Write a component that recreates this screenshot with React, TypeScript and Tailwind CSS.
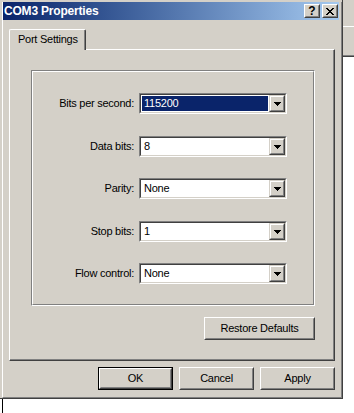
import React from "react";

const FONT = "font-['Liberation_Sans',Arial,sans-serif]";

function Bevel({
  className = "",
  innerClassName = "",
  children,
}: {
  className?: string;
  innerClassName?: string;
  children?: React.ReactNode;
}) {
  return (
    <div
      className={`border border-t-white border-l-white border-r-[#404040] border-b-[#404040] bg-[#d4d0c8] ${className}`}
    >
      <div
        className={`h-full w-full border border-t-[#d4d0c8] border-l-[#d4d0c8] border-r-[#808080] border-b-[#808080] ${innerClassName}`}
      >
        {children}
      </div>
    </div>
  );
}

function ArrowBtn() {
  return (
    <div className="w-[16px] h-[17px] border border-t-[#d4d0c8] border-l-[#d4d0c8] border-r-[#404040] border-b-[#404040] bg-[#d4d0c8]">
      <div className="h-full w-full border border-t-white border-l-white border-r-[#808080] border-b-[#808080] flex items-center justify-center">
        <svg width="7" height="4" viewBox="0 0 7 4" shapeRendering="crispEdges">
          <rect x="0" y="0" width="7" height="1" fill="#000" />
          <rect x="1" y="1" width="5" height="1" fill="#000" />
          <rect x="2" y="2" width="3" height="1" fill="#000" />
          <rect x="3" y="3" width="1" height="1" fill="#000" />
        </svg>
      </div>
    </div>
  );
}

function Combo({ value, selected = false }: { value: string; selected?: boolean }) {
  return (
    <div className="w-[148px] h-[21px] border border-t-[#808080] border-l-[#808080] border-r-white border-b-white">
      <div className="h-full w-full border border-t-[#404040] border-l-[#404040] border-r-[#d4d0c8] border-b-[#d4d0c8] bg-white flex">
        <div className="flex-1 p-[1px] flex">
          {selected ? (
            <div className="flex-1 bg-[#0a246a] text-white pl-[2px] flex items-center">{value}</div>
          ) : (
            <div className="flex-1 text-black pl-[2px] flex items-center">{value}</div>
          )}
        </div>
        <ArrowBtn />
      </div>
    </div>
  );
}

function Row({ label, value, selected = false }: { label: string; value: string; selected?: boolean }) {
  return (
    <div className="flex items-center h-[21px]">
      <div className="w-[101px] text-right text-black">{label}</div>
      <div className="ml-[5px]">
        <Combo value={value} selected={selected} />
      </div>
    </div>
  );
}

function CloseGlyph() {
  const px: [number, number, number][] = [
    [0, 0, 2],
    [6, 0, 2],
    [1, 1, 2],
    [5, 1, 2],
    [2, 2, 4],
    [3, 3, 2],
    [2, 4, 4],
    [1, 5, 2],
    [5, 5, 2],
    [0, 6, 2],
    [6, 6, 2],
  ];
  return (
    <svg width="8" height="7" viewBox="0 0 8 7" shapeRendering="crispEdges">
      {px.map(([x, y, w], i) => (
        <rect key={i} x={x} y={y} width={w} height={1} fill="#000" />
      ))}
    </svg>
  );
}

export default function App() {
  return (
    <div className={`w-[354px] h-[413px] bg-white overflow-hidden text-[11px] tracking-[-0.25px] ${FONT}`}>
      <div className="flex">
        {/* Window */}
        <div className="w-[343px] h-[399px] bg-[#d4d0c8] border-r border-b border-[#404040] pl-[2px] pt-[2px]">
          <div className="h-full border-l border-l-white border-r border-r-[#808080] border-b border-b-[#808080] pr-[2px] flex flex-col">
            {/* Title bar */}
            <div className="h-[18px] shrink-0 bg-gradient-to-r from-[#0a246a] to-[#a6caf0] flex items-center">
              <span className="pl-[1px] text-white font-bold text-[12px] tracking-[-0.2px] leading-none">
                COM3 Properties
              </span>
              <div className="ml-auto mr-[1px] flex gap-[2px]">
                <Bevel className="w-[16px] h-[14px]" innerClassName="flex items-center justify-center">
                  <span className="text-black font-bold text-[12px] leading-none tracking-normal">?</span>
                </Bevel>
                <Bevel className="w-[16px] h-[14px]" innerClassName="flex items-center justify-center">
                  <CloseGlyph />
                </Bevel>
              </div>
            </div>

            {/* Tab */}
            <div className="mt-[9px] ml-[6px] w-[77px] h-[21px] -mb-[1px] relative z-10 bg-[#d4d0c8] border-l border-t border-white border-r border-r-[#404040] rounded-tl-[2px] rounded-tr-[2px]">
              <div className="h-full border-r border-r-[#808080] flex items-center pl-[8px] pb-[1px] text-black">
                Port Settings
              </div>
            </div>

            {/* Panel */}
            <div className="ml-[6px] w-[326px] h-[312px] border-l border-t border-white border-r border-r-[#404040] border-b border-b-[#404040]">
              <div className="h-full border-r border-r-[#808080] border-b border-b-[#808080] pl-[21px] pt-[20px]">
                <div className="w-[284px] flex flex-col items-end">
                  {/* Group box (etched) */}
                  <div className="w-full border border-t-[#808080] border-l-[#808080] border-r-white border-b-white">
                    <div className="border border-t-white border-l-white border-r-[#808080] border-b-[#808080] pt-[21px] pb-[20px] flex flex-col">
                      <Row label="Bits per second:" value="115200" selected />
                      <div className="h-[22px]" />
                      <Row label="Data bits:" value="8" />
                      <div className="h-[21px]" />
                      <Row label="Parity:" value="None" />
                      <div className="h-[22px]" />
                      <Row label="Stop bits:" value="1" />
                      <div className="h-[21px]" />
                      <Row label="Flow control:" value="None" />
                    </div>
                  </div>
                  <Bevel className="mt-[11px] w-[111px] h-[23px]" innerClassName="flex items-center justify-center text-black">
                    Restore Defaults
                  </Bevel>
                </div>
              </div>
            </div>

            {/* Bottom buttons */}
            <div className="mt-[6px] flex justify-end gap-[6px] pr-[4px]">
              <div className="w-[75px] h-[23px] border border-black">
                <Bevel className="w-full h-full" innerClassName="flex items-center justify-center text-black">
                  OK
                </Bevel>
              </div>
              <Bevel className="w-[75px] h-[23px]" innerClassName="flex items-center justify-center text-black">
                Cancel
              </Bevel>
              <Bevel className="w-[75px] h-[23px]" innerClassName="flex items-center justify-center text-black">
                Apply
              </Bevel>
            </div>
          </div>
        </div>

        {/* Right strip: neighbouring window */}
        <div className="w-[11px] flex flex-col">
          <div className="h-[26px] bg-[#d4d0c8]" />
          <div className="h-[1px] bg-white" />
          <div className="h-[28px] bg-[#d4d0c8]" />
          <div className="h-[1px] bg-[#808080]" />
          <div className="h-[1px] bg-[#404040]" />
          <div className="flex-1 bg-white" />
        </div>
      </div>

      {/* Below the window */}
      <div className="h-[14px] flex">
        <div className="ml-[2px] w-[1px] h-full bg-black" />
      </div>
    </div>
  );
}
